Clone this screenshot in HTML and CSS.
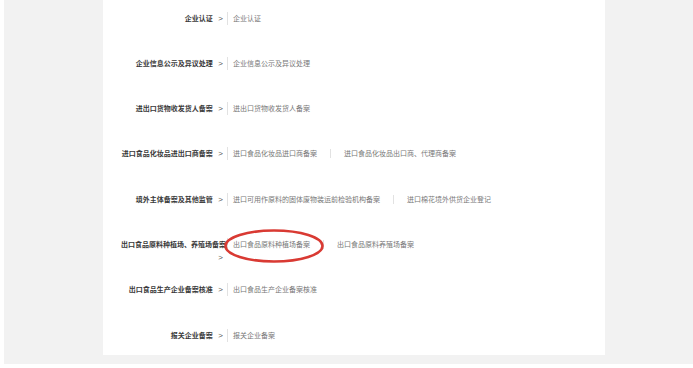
FILE: index.html
```html
<!DOCTYPE html>
<html lang="zh-CN">
<head>
  <meta charset="UTF-8" />
  <title>备案业务</title>
  <link rel="stylesheet" href="styles.css">
</head>
<body>

<div class="page">
  <div class="card">
    <div class="row">
      <div class="label"><span class="name">企业认证</span> <span class="arr">&gt;</span></div>
      <div class="items"><span class="item">企业认证</span></div>
    </div>
    <div class="row">
      <div class="label"><span class="name">企业信息公示及异议处理</span> <span class="arr">&gt;</span></div>
      <div class="items"><span class="item">企业信息公示及异议处理</span></div>
    </div>
    <div class="row">
      <div class="label"><span class="name">进出口货物收发货人备案</span> <span class="arr">&gt;</span></div>
      <div class="items"><span class="item">进出口货物收发货人备案</span></div>
    </div>
    <div class="row">
      <div class="label"><span class="name">进口食品化妆品进出口商备案</span> <span class="arr">&gt;</span></div>
      <div class="items">
        <span class="item">进口食品化妆品进口商备案</span>
        <span class="sep"></span>
        <span class="item">进口食品化妆品出口商、代理商备案</span>
      </div>
    </div>
    <div class="row">
      <div class="label"><span class="name">境外主体备案及其他监管</span> <span class="arr">&gt;</span></div>
      <div class="items">
        <span class="item">进口可用作原料的固体废物装运前检验机构备案</span>
        <span class="sep"></span>
        <span class="item">进口棉花境外供货企业登记</span>
      </div>
    </div>
    <div class="row">
      <div class="label"><span class="name">出口食品原料种植场、养殖场备案</span> <span class="arr">&gt;</span></div>
      <div class="items">
        <span class="item marked">出口食品原料种植场备案
          <svg class="circle" width="102" height="36" viewBox="0 0 102 36">
            <ellipse cx="51" cy="18" rx="48.5" ry="15.5" fill="none" stroke="#d93a33" stroke-width="2.6"/>
          </svg>
        </span>
        <span class="sep"></span>
        <span class="item">出口食品原料养殖场备案</span>
      </div>
    </div>
    <div class="row">
      <div class="label"><span class="name">出口食品生产企业备案核准</span> <span class="arr">&gt;</span></div>
      <div class="items"><span class="item">出口食品生产企业备案核准</span></div>
    </div>
    <div class="row">
      <div class="label"><span class="name">报关企业备案</span> <span class="arr">&gt;</span></div>
      <div class="items"><span class="item">报关企业备案</span></div>
    </div>
  </div>
</div>

</body>
</html>
```

FILE: styles.css
```css
body {
  margin: 0;
  background: #fff;
  font-family: "Noto Sans CJK SC", "Noto Sans", sans-serif;
}

.page {
  margin-left: 4px;
  height: 364px;
  padding-left: 99px;
  background: #f2f2f2;
  box-sizing: border-box;
}

.card {
  width: 502px;
  height: 355px;
  padding-top: 11.5px;
  background: #fff;
  box-sizing: border-box;
}

.row {
  display: flex;
  align-items: flex-start;
  height: 45.33px;
  font-size: 7px;
  line-height: 13px;
}

.label {
  width: 102px;
  margin-left: 18px;
  text-align: right;
  color: #3a3a3a;
  font-weight: bold;
}

.name {
  white-space: nowrap;
}

.arr {
  display: inline-block;
  margin-left: 4px;
  font-weight: normal;
  font-size: 8px;
  color: #555;
  font-family: "Liberation Sans", sans-serif;
}

.items {
  display: flex;
  align-items: center;
  height: 13px;
  margin-left: 4px;
  padding-left: 5px;
  border-left: 1px solid #e2e2e2;
  color: #777;
}

.item {
  white-space: nowrap;
}

.sep {
  width: 1px;
  height: 9px;
  margin: 0 13px;
  background: #e2e2e2;
}

.marked {
  position: relative;
}

.circle {
  position: absolute;
  left: -10px;
  top: -10px;
}
```
